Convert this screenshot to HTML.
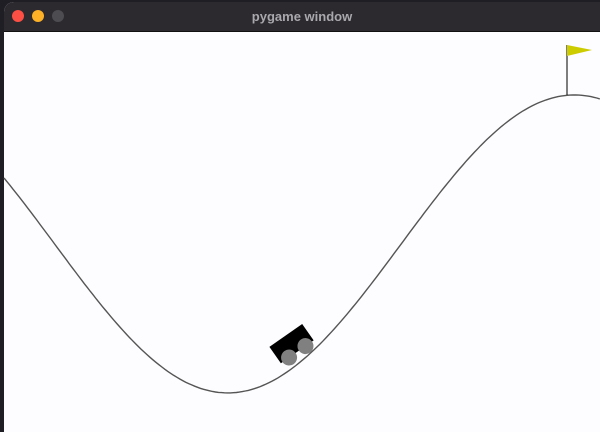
<!DOCTYPE html>
<html><head><style>
html,body{margin:0;padding:0;width:600px;height:426px;overflow:hidden;background:#1e1e24;}
.win{position:absolute;left:4px;top:2px;width:600px;height:430px;border-radius:10px 0 0 0;overflow:hidden;background:#fdfcfe;}
.bar{height:29px;background:#2c2a2f;border-bottom:1px solid #111;position:relative;}
.t{position:absolute;left:0;right:4px;top:7px;text-align:center;color:#a9a8ad;font:bold 13px "Liberation Sans",sans-serif;}
.d{position:absolute;top:8px;width:12px;height:12px;border-radius:50%;}
svg{position:absolute;left:0;top:0}
</style></head><body>
<div class="win"><div class="bar">
<div class="d" style="left:8px;background:#fe4f45"></div>
<div class="d" style="left:28px;background:#fdb126"></div>
<div class="d" style="left:48px;background:#4d4c51"></div>
<div class="t">pygame window</div></div></div>
<svg width="600" height="426" id="s">
<path id="c" fill="none" stroke="#555" stroke-width="1.4"/>
<line x1="567" y1="95" x2="567" y2="45" stroke="#000" stroke-width="1"/>
<polygon points="567,45 567,56 592,50" fill="#cccc00"/>
<g transform="translate(303,360) rotate(-35)">
<rect x="-20" y="-30" width="40" height="20" fill="#000"/>
<circle cx="-10" cy="-10" r="8" fill="#808080"/>
<circle cx="10" cy="-10" r="8" fill="#808080"/>
</g>
</svg>
<script>
var d="";for(var i=0;i<=200;i++){var x=-1.2+1.8*i/200;var px=4+(x+1.2)*331;var py=426-331*(0.45*Math.sin(3*x)+0.55);d+=(i?"L":"M")+px.toFixed(1)+" "+py.toFixed(1);}
document.getElementById("c").setAttribute("d",d);
</script>
</body></html>
